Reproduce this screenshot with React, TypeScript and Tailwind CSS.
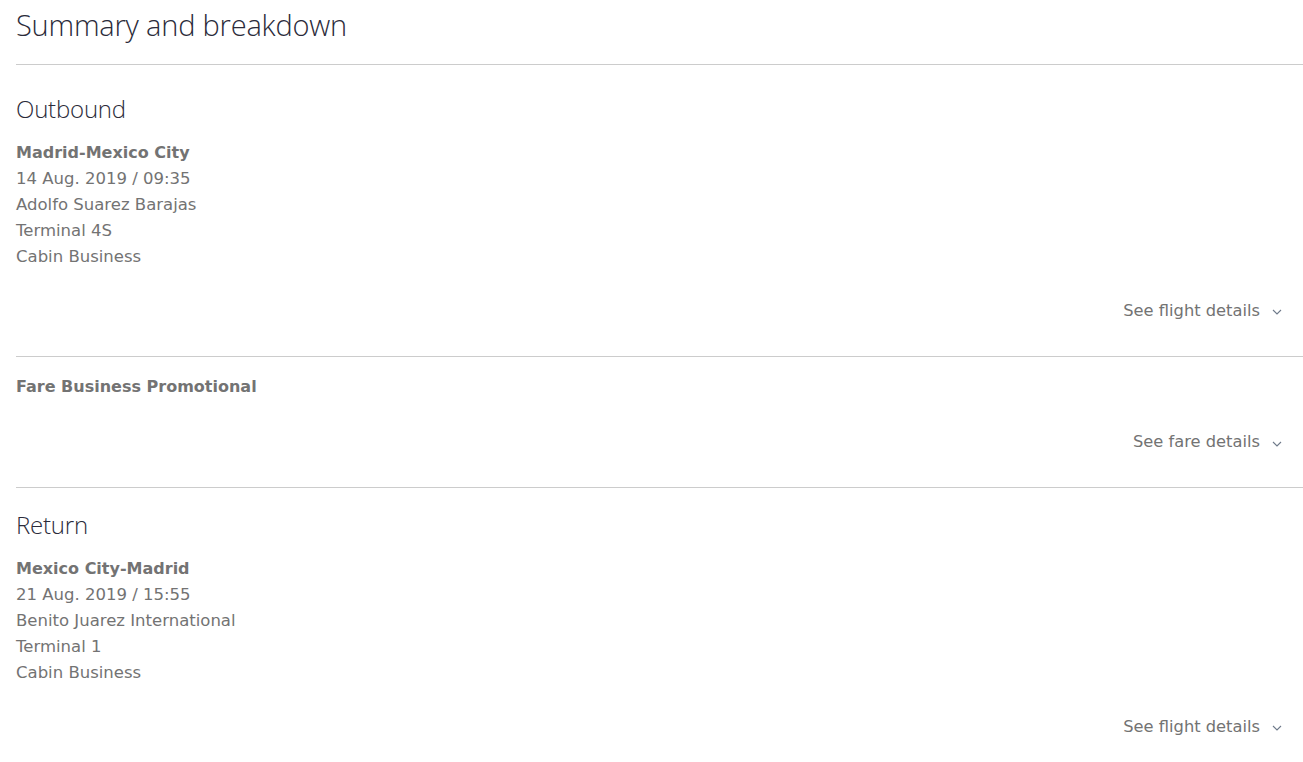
const body = { fontFamily: '"DejaVu Sans", Verdana, sans-serif' };
const display = { fontFamily: '"Open Sans", sans-serif' };

function Chevron() {
  return (
    <svg width="10" height="6" viewBox="0 0 10 6" className="ml-[12px] mt-[2px]">
      <path d="M1 1l4 4 4-4" fill="none" stroke="#6f7a8a" strokeWidth="1.1" />
    </svg>
  );
}

function DetailsLink({ label }: { label: string }) {
  return (
    <div className="flex justify-end pr-[21px]">
      <button className="flex items-center text-[16.3px] text-[#737373]" style={body}>
        {label}
        <Chevron />
      </button>
    </div>
  );
}

interface Leg {
  route: string;
  date: string;
  airport: string;
  terminal: string;
  cabin: string;
}

function LegBlock({ title, leg, top }: { title: string; leg: Leg; top: string }) {
  return (
    <section className={`border-b border-[#cccccc] pb-[33px] ${top}`}>
      <h2 className="text-[24px] font-light leading-none tracking-[-0.2px] text-[#2b2b3a]" style={display}>
        {title}
      </h2>
      <div className="mt-[19px] leading-[26px] text-[#737373]" style={body}>
        <p className="text-[16px] font-bold">{leg.route}</p>
        <p className="text-[16.5px]">{leg.date}</p>
        <p className="text-[16.5px]">{leg.airport}</p>
        <p className="text-[16.5px]">{leg.terminal}</p>
        <p className="text-[16.5px]">{leg.cabin}</p>
      </div>
      <div className="mt-[29px]">
        <DetailsLink label="See flight details" />
      </div>
    </section>
  );
}

export default function App() {
  return (
    <div className="min-h-screen bg-white pl-[16px]">
      <h1
        className="pt-[6px] pb-[21px] text-[29px] font-light tracking-[-0.2px] text-[#2b2b3a] leading-[37px]"
        style={display}
      >
        Summary and breakdown
      </h1>
      <div className="border-t border-[#cccccc]">
        <LegBlock
          top="pt-[32px]"
          title="Outbound"
          leg={{
            route: "Madrid-Mexico City",
            date: "14 Aug. 2019 / 09:35",
            airport: "Adolfo Suarez Barajas",
            terminal: "Terminal 4S",
            cabin: "Cabin Business",
          }}
        />
        <section className="border-b border-[#cccccc] pt-[17px] pb-[32px]">
          <p className="text-[16px] font-bold leading-[26px] text-[#737373]" style={body}>
            Fare Business Promotional
          </p>
          <div className="mt-[30px]">
            <DetailsLink label="See fare details" />
          </div>
        </section>
        <LegBlock
          top="pt-[25px]"
          title="Return"
          leg={{
            route: "Mexico City-Madrid",
            date: "21 Aug. 2019 / 15:55",
            airport: "Benito Juarez International",
            terminal: "Terminal 1",
            cabin: "Cabin Business",
          }}
        />
      </div>
    </div>
  );
}
